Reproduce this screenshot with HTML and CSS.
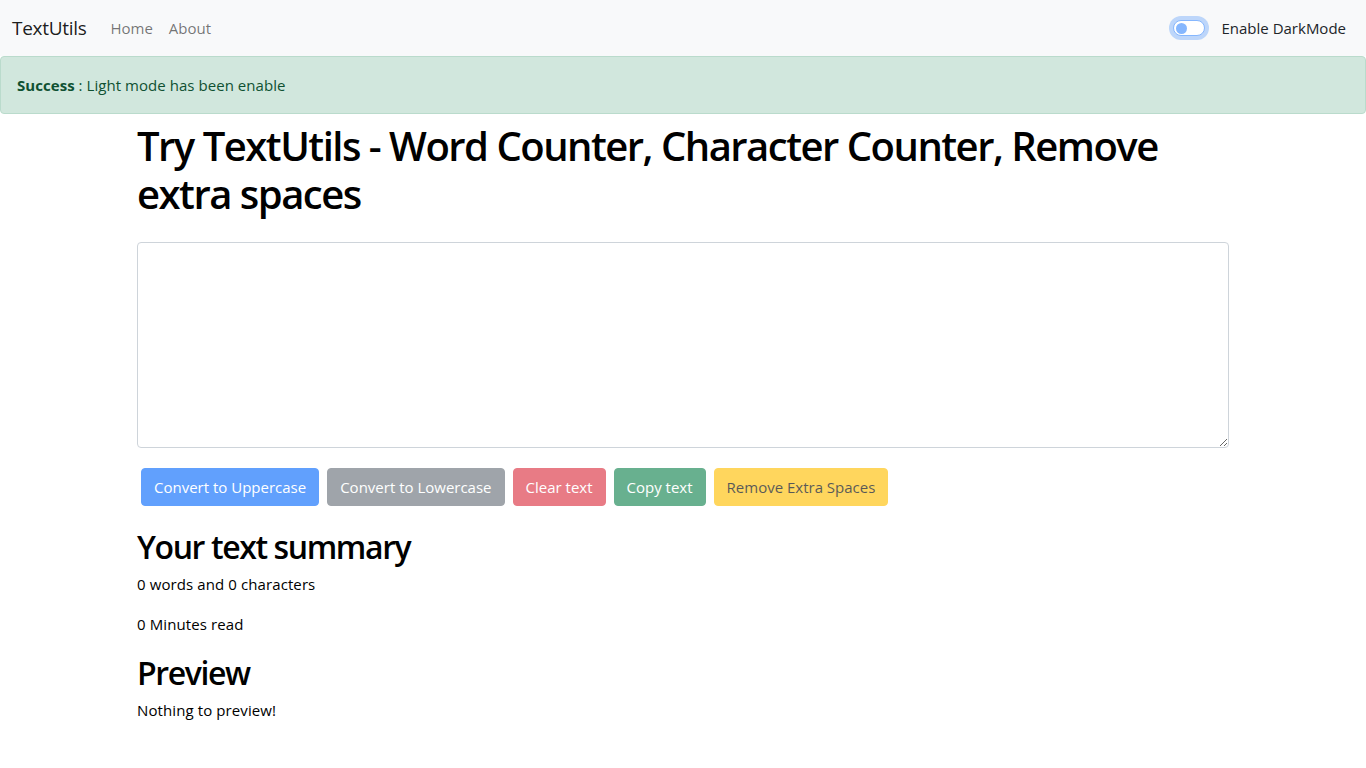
FILE: index.html
```html
<!DOCTYPE html>
<html lang="en">
<head>
<meta charset="utf-8">
<title>TextUtils</title>
<link rel="stylesheet" href="styles.css">
</head>
<body>
<nav class="navbar">
  <div class="nav-inner">
    <a class="brand" href="#">TextUtils</a>
    <ul class="nav-links">
      <li><a href="#">Home</a></li>
      <li><a href="#">About</a></li>
    </ul>
    <div class="switch">
      <span class="switch-track"><span class="switch-knob"></span></span>
      <label class="switch-label">Enable DarkMode</label>
    </div>
  </div>
</nav>
<div class="alert-wrap">
  <div class="alert"><strong>Success</strong> : Light mode has been enable</div>
</div>
<main class="container top">
  <h1 class="title">Try TextUtils - Word Counter, Character Counter, Remove extra spaces</h1>
  <div class="field">
    <textarea class="textarea" rows="8"></textarea>
  </div>
  <div class="buttons">
    <button class="btn primary">Convert to Uppercase</button>
    <button class="btn secondary">Convert to Lowercase</button>
    <button class="btn danger">Clear text</button>
    <button class="btn success">Copy text</button>
    <button class="btn warning">Remove Extra Spaces</button>
  </div>
</main>
<section class="container summary">
  <h2>Your text summary</h2>
  <p>0 words and 0 characters</p>
  <p>0 Minutes read</p>
  <h2>Preview</h2>
  <p>Nothing to preview!</p>
</section>
</body>
</html>
```
FILE: styles.css
```css
* { box-sizing: border-box; }
html, body { margin: 0; padding: 0; }
body {
  font-family: "Open Sans", "Noto Sans", "Liberation Sans", sans-serif;
  font-size: 16px;
  line-height: 24px;
  color: #212529;
  background: #fff;
}
.navbar {
  background: #f8f9fa;
  padding: 8px 0;
}
.nav-inner {
  display: flex;
  align-items: center;
  padding: 0 12px;
  height: 40px;
}
.brand {
  font-size: 19px;
  line-height: 30px;
  color: rgba(0,0,0,.9);
  text-decoration: none;
  margin-right: 16px;
  letter-spacing: -0.3px;
}
.nav-links {
  display: flex;
  list-style: none;
  margin: 0;
  padding: 0;
  flex: 1;
}
.nav-links a {
  display: block;
  padding: 8px 8px;
  color: rgba(0,0,0,.55);
  text-decoration: none;
  font-size: 15px;
}
.switch {
  display: flex;
  align-items: center;
  margin-right: 8px;
}
.switch-track {
  width: 32px;
  height: 16px;
  border: 1px solid #86b7fe;
  border-radius: 8px;
  background: #fff;
  box-shadow: 0 0 0 4px rgba(13,110,253,.25);
  display: flex;
  align-items: center;
  padding-left: 2px;
}
.switch-knob {
  width: 11px;
  height: 11px;
  border-radius: 50%;
  background: #86b7fe;
}
.switch-label {
  margin-left: 17px;
  font-size: 15px;
  color: #212529;
}
.alert-wrap { height: 50px; }
.alert {
  background: #d1e7dd;
  border: 1px solid #badbcc;
  color: #0f5132;
  border-radius: 4px;
  padding: 16px;
  font-size: 15px;
  letter-spacing: 0.05px;
}
.alert strong { font-weight: 700; }
.container {
  width: 1092px;
  margin: 0 auto;
}
.top { padding-top: 16px; }
.title {
  font-size: 40px;
  line-height: 48px;
  font-weight: 600;
  margin: 0 0 24px;
  letter-spacing: -1.5px;
  color: #000;
}
.field { margin-bottom: 16px; }
.textarea {
  display: block;
  width: 100%;
  height: 206px;
  border: 1px solid #ced4da;
  border-radius: 4px;
  padding: 6px 12px;
  font: inherit;
  resize: vertical;
}
.buttons {
  display: flex;
  gap: 8px;
  padding: 4px 4px;
}
.btn {
  font: inherit;
  font-size: 15px;
  line-height: 24px;
  padding: 6px 12px;
  border: 1px solid transparent;
  border-radius: 4px;
  color: #fff;
  opacity: .65;
}
.primary { background: #0d6efd; border-color: #0d6efd; }
.secondary { background: #6c757d; border-color: #6c757d; }
.danger { background: #dc3545; border-color: #dc3545; }
.success { background: #198754; border-color: #198754; }
.warning { background: #ffc107; border-color: #ffc107; color: #000; }
.summary { padding-top: 16px; }
.summary h2 {
  font-size: 32px;
  line-height: 38px;
  font-weight: 600;
  margin: 0 0 6px;
  padding-top: 2px;
  letter-spacing: -1.4px;
  color: #000;
}
.summary p {
  margin: 0 0 16px;
  font-size: 15px;
  letter-spacing: 0.1px;
  color: #000;
}
```
